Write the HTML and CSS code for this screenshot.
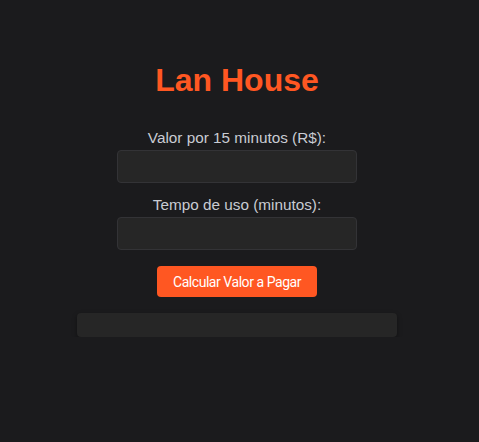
FILE: index.html
```html
<!DOCTYPE html>
<html lang="pt-BR">
<head>
<meta charset="utf-8">
<title>Lan House</title>
<link rel="stylesheet" href="styles.css">
</head>
<body>
<div class="container">
  <h1 class="title">Lan House</h1>
  <label class="label" for="valor">Valor por 15 minutos (R$):</label>
  <input class="field" id="valor" type="number">
  <label class="label" for="tempo">Tempo de uso (minutos):</label>
  <input class="field" id="tempo" type="number">
  <button class="btn" type="button">Calcular Valor a Pagar</button>
  <div class="result"></div>
</div>
</body>
</html>
```

FILE: styles.css
```css
html, body {
  margin: 0;
  padding: 0;
  background: #1b1b1d;
}
body {
  font-family: "Liberation Sans", Arial, sans-serif;
  color: #c9ccd3;
}
.container {
  width: 320px;
  margin-left: 77px;
  padding-top: 60px;
  display: flex;
  flex-direction: column;
  align-items: center;
}
.title {
  margin: 0 0 29px;
  font-size: 32px;
  font-weight: bold;
  line-height: 40px;
  color: #ff5722;
}
.label {
  display: block;
  font-size: 15.3px;
  line-height: 17px;
  margin-top: 13px;
}
.title + .label { margin-top: 0; }
.field {
  box-sizing: border-box;
  width: 240px;
  height: 33px;
  margin-top: 4px;
  background: #262626;
  border: 1px solid #333336;
  border-radius: 4px;
  color: #ddd;
}
.btn {
  margin-top: 16px;
  width: 160px;
  height: 31px;
  padding: 0;
  border: none;
  border-radius: 4px;
  background: #ff5722;
  color: #fff;
  font-family: Roboto, "Liberation Sans", sans-serif;
  font-size: 14px;
  font-weight: 400;
  letter-spacing: -0.45px;
  cursor: pointer;
}
.result {
  margin-top: 16px;
  width: 320px;
  height: 24px;
  background: #262626;
  border-radius: 4px;
  box-shadow: 0 2px 5px rgba(0,0,0,0.4);
}
```
